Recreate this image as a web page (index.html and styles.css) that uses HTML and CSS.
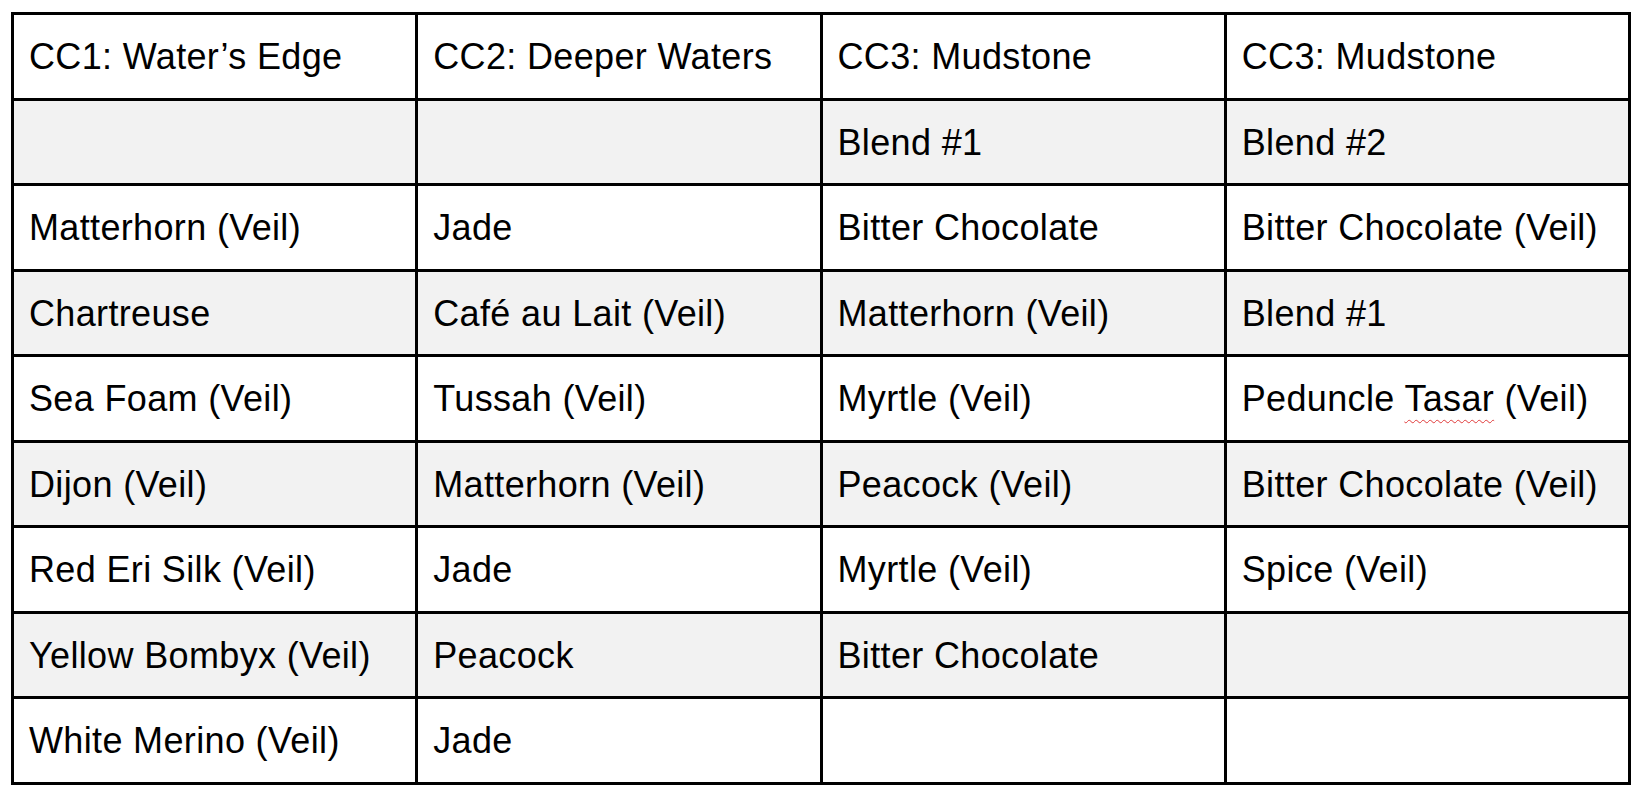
FILE: index.html
```html
<!DOCTYPE html>
<html>
<head>
<meta charset="utf-8">
<link rel="stylesheet" href="styles.css">
</head>
<body>
<table class="grid">
  <tr><td>CC1: Water’s Edge</td><td>CC2: Deeper Waters</td><td>CC3: Mudstone</td><td>CC3: Mudstone</td></tr>
  <tr class="alt"><td></td><td></td><td>Blend #1</td><td>Blend #2</td></tr>
  <tr><td>Matterhorn (Veil)</td><td>Jade</td><td>Bitter Chocolate</td><td>Bitter Chocolate (Veil)</td></tr>
  <tr class="alt"><td>Chartreuse</td><td>Café au Lait (Veil)</td><td>Matterhorn (Veil)</td><td>Blend #1</td></tr>
  <tr><td>Sea Foam (Veil)</td><td>Tussah (Veil)</td><td>Myrtle (Veil)</td><td>Peduncle <span class="spell">Tasar</span> (Veil)</td></tr>
  <tr class="alt"><td>Dijon (Veil)</td><td>Matterhorn (Veil)</td><td>Peacock (Veil)</td><td>Bitter Chocolate (Veil)</td></tr>
  <tr><td>Red Eri Silk (Veil)</td><td>Jade</td><td>Myrtle (Veil)</td><td>Spice (Veil)</td></tr>
  <tr class="alt"><td>Yellow Bombyx (Veil)</td><td>Peacock</td><td>Bitter Chocolate</td><td></td></tr>
  <tr><td>White Merino (Veil)</td><td>Jade</td><td></td><td></td></tr>
</table>
</body>
</html>
```
FILE: styles.css
```css
html, body {
  margin: 0;
  padding: 0;
  background: #ffffff;
}
body {
  padding: 12px 0 0 11px;
}
.grid {
  border-collapse: collapse;
  table-layout: fixed;
  width: 1620px;
  font-family: "Liberation Sans", Arial, Helvetica, sans-serif;
  font-size: 36px;
  letter-spacing: 0.35px;
  color: #000;
}
.grid td {
  border: 3px solid #000;
  height: 85.5px;
  box-sizing: border-box;
  padding: 2px 0 0 15px;
  vertical-align: middle;
  white-space: nowrap;
  overflow: hidden;
}
.grid tr.alt td {
  background: #f2f2f2;
}
.spell {
  text-decoration: underline wavy #e03a3a;
  text-decoration-thickness: 1px;
  text-underline-offset: 8px;
}
```
